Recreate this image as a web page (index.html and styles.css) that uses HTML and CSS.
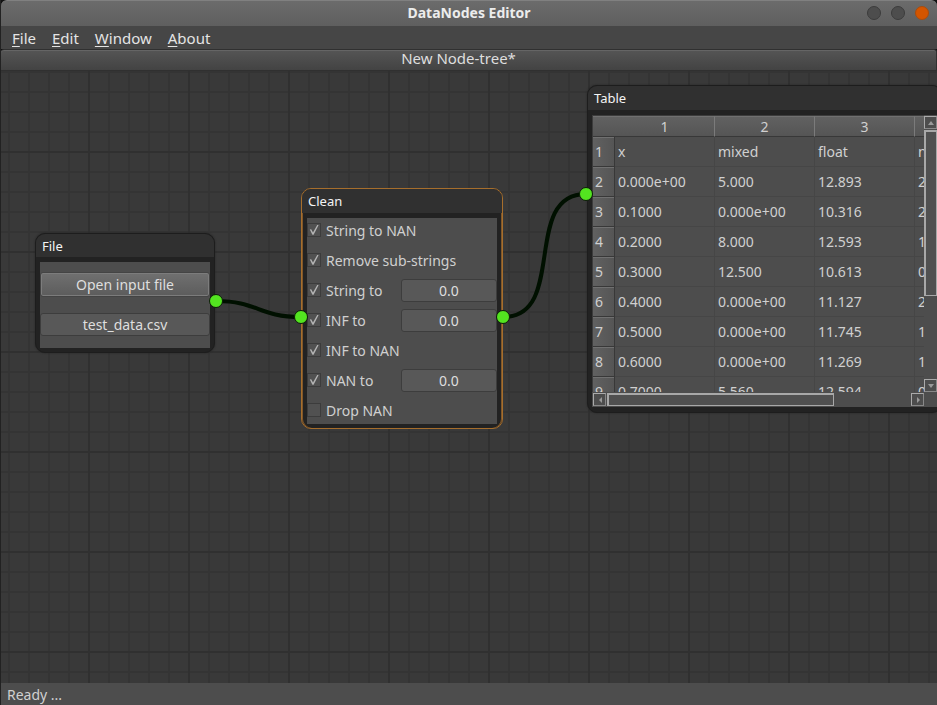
FILE: index.html
```html
<!DOCTYPE html>
<html lang="en">
<head>
<meta charset="utf-8">
<title>DataNodes Editor</title>
<link rel="stylesheet" href="styles.css">
</head>
<body>
<header class="titlebar">
  <h1>DataNodes Editor</h1>
  <div class="window-buttons">
    <button aria-label="Minimize"></button>
    <button aria-label="Maximize"></button>
    <button class="close" aria-label="Close"></button>
  </div>
</header>
<nav class="menubar">
  <button><u>F</u>ile</button>
  <button><u>E</u>dit</button>
  <button><u>W</u>indow</button>
  <button><u>A</u>bout</button>
</nav>
<div class="tab-title">New Node-tree*</div>
<main class="canvas">
  <svg class="wires" aria-hidden="true">
    <path d="M216 230C258 230 258 246 301 246"/>
    <path d="M503 246C568 246 521 123 586 123"/>
  </svg>

  <section class="node node-file">
    <h2>File</h2>
    <div class="panel file-panel">
      <button class="open">Open input file</button>
      <input class="field" type="text" aria-label="File name" value="test_data.csv">
    </div>
  </section>

  <section class="node node-clean">
    <h2>Clean</h2>
    <div class="panel clean-panel">
      <div class="option"><label><input type="checkbox" checked><span>String to NAN</span></label></div>
      <div class="option"><label><input type="checkbox" checked><span>Remove sub-strings</span></label></div>
      <div class="option"><label><input type="checkbox" checked><span>String to</span></label><input class="field" type="text" aria-label="String value" value="0.0"></div>
      <div class="option"><label><input type="checkbox" checked><span>INF to</span></label><input class="field" type="text" aria-label="INF value" value="0.0"></div>
      <div class="option"><label><input type="checkbox" checked><span>INF to NAN</span></label></div>
      <div class="option"><label><input type="checkbox" checked><span>NAN to</span></label><input class="field" type="text" aria-label="NAN value" value="0.0"></div>
      <div class="option"><label><input type="checkbox"><span>Drop NAN</span></label></div>
    </div>
  </section>

  <section class="node node-table">
    <h2>Table</h2>
    <div class="panel table-panel">
      <div class="viewport">
        <table>
          <colgroup><col class="index"><col><col><col><col></colgroup>
          <thead><tr><td class="corner"></td><th>1</th><th>2</th><th>3</th><th></th></tr></thead>
          <tbody>
            <tr><th>1</th><td>x</td><td>mixed</td><td>float</td><td>n</td></tr>
            <tr><th>2</th><td>0.000e+00</td><td>5.000</td><td>12.893</td><td>2</td></tr>
            <tr><th>3</th><td>0.1000</td><td>0.000e+00</td><td>10.316</td><td>2</td></tr>
            <tr><th>4</th><td>0.2000</td><td>8.000</td><td>12.593</td><td>1</td></tr>
            <tr><th>5</th><td>0.3000</td><td>12.500</td><td>10.613</td><td>0</td></tr>
            <tr><th>6</th><td>0.4000</td><td>0.000e+00</td><td>11.127</td><td>2</td></tr>
            <tr><th>7</th><td>0.5000</td><td>0.000e+00</td><td>11.745</td><td>1</td></tr>
            <tr><th>8</th><td>0.6000</td><td>0.000e+00</td><td>11.269</td><td>1</td></tr>
            <tr><th>9</th><td>0.7000</td><td>5.560</td><td>12.594</td><td>0</td></tr>
          </tbody>
        </table>
      </div>
      <div class="scroll vertical">
        <button aria-label="Scroll up"><svg viewBox="0 0 10 10"><path d="M2 7 5 3 8 7z"/></svg></button>
        <div class="track"><div class="thumb"></div></div>
        <button aria-label="Scroll down"><svg viewBox="0 0 10 10"><path d="M2 3 5 7 8 3z"/></svg></button>
      </div>
      <div class="scroll horizontal">
        <button aria-label="Scroll left"><svg viewBox="0 0 10 10"><path d="M7 2 4 5 7 8z"/></svg></button>
        <div class="track"><div class="thumb"></div></div>
        <button aria-label="Scroll right"><svg viewBox="0 0 10 10"><path d="M4 2 7 5 4 8z"/></svg></button>
      </div>
    </div>
  </section>

  <svg class="ports" aria-hidden="true">
    <circle cx="216" cy="230" r="6.5"/>
    <circle cx="301" cy="246" r="6.5"/>
    <circle cx="503" cy="246" r="6.5"/>
    <circle cx="586" cy="123" r="6.5"/>
  </svg>
</main>
<footer class="status">Ready ...</footer>
</body>
</html>
```
FILE: styles.css
```css
* { box-sizing: border-box; }

body {
  margin: 0;
  height: 100vh;
  display: flex;
  flex-direction: column;
  overflow: hidden;
  border-left: 1px solid #222;
  background: #111;
  color: #d0d0d0;
  font: 14px/20px "Noto Sans", "Open Sans", sans-serif;
}

button, input { font: inherit; color: inherit; margin: 0; }
h1, h2 { margin: 0; }

.titlebar {
  display: grid;
  grid-template-columns: 1fr auto 1fr;
  align-items: center;
  height: 26px;
  flex: none;
  padding: 0 8px 2px 0;
  border-top: 1px solid #808080;
  border-radius: 6px 6px 0 0;
  background: linear-gradient(#6b6b6b, #5f5f5f);
}
.titlebar h1 {
  grid-column: 2;
  padding-left: 8px;
  color: #ececec;
  font-size: 14px;
  line-height: 20px;
}
.window-buttons { display: flex; gap: 10px; justify-content: flex-end; }
.window-buttons button {
  width: 14px;
  height: 14px;
  padding: 0;
  border: 1px solid #3c3c3c;
  border-radius: 50%;
  background: #4d4d4d;
}
.window-buttons .close { background: #d45500; border-color: #aa4c0c; }

.menubar {
  display: flex;
  gap: 16px;
  height: 23px;
  flex: none;
  padding: 1px 11px;
  background: #464646;
}
.menubar button {
  padding: 0;
  border: 0;
  background: none;
  color: #e4e4e4;
  font-size: 15px;
  line-height: 20px;
}
.menubar u { text-underline-offset: 2px; }

.tab-title {
  height: 22px;
  flex: none;
  padding-right: 20px;
  border: 1px solid #303030;
  border-width: 1px 1px 1px 0;
  border-radius: 3px 3px 0 0;
  background: linear-gradient(#555, #434343);
  box-shadow: inset 0 1px #656565;
  color: #dedede;
  font-size: 15px;
  line-height: 16px;
  text-align: center;
}

.canvas {
  position: relative;
  flex: 1;
  min-height: 0;
  overflow: hidden;
  background-color: #393939;
  background-image:
    linear-gradient(90deg, #303030 2px, transparent 2px),
    linear-gradient(#303030 2px, transparent 2px),
    linear-gradient(90deg, #343434 2px, transparent 2px),
    linear-gradient(#343434 2px, transparent 2px);
  background-size: 100px 100px, 100px 100px, 20px 20px, 20px 20px;
  background-position: 87px 0, 0 80px, 7px 0, 0 0;
}
.wires, .ports {
  position: absolute;
  top: 0;
  left: -1px;
  width: 100%;
  height: 100%;
  pointer-events: none;
}
.wires path { fill: none; stroke: #001000; stroke-width: 4; }
.ports circle { fill: #53e420; stroke: #0c1c08; stroke-width: 1; }

.node {
  position: absolute;
  padding: 0 4px 4px;
  border: 1px solid #1d1d1d;
  border-radius: 10px;
  background: #222;
  box-shadow: 0 0 2px #222;
}
.node h2 {
  height: 24px;
  margin: 0 -4px 5px;
  padding: 0 6px;
  border-radius: 9px 9px 0 0;
  background: #303030;
  color: #f4f4f4;
  font-size: 13px;
  font-weight: 400;
  line-height: 24px;
}
.panel { background: #4d4d4d; }

.field {
  height: 23px;
  width: 96px;
  padding: 0 4px;
  border: 1px solid #3d3d3d;
  border-radius: 3px;
  background: #585858;
  color: #dedede;
  text-align: center;
}

.node-file { left: 34px; top: 162px; width: 180px; }
.node-file h2 { height: 23px; }
.file-panel {
  display: flex;
  flex-direction: column;
  gap: 16px;
  padding: 10px 0 12px;
}
.file-panel .field { width: 100%; }
.open {
  height: 25px;
  padding: 0;
  border: 1px solid #444;
  border-radius: 3px;
  background: linear-gradient(#707070, #5c5c5c);
  box-shadow: inset 0 0 0 1px #7c7c7c;
  color: #dedede;
}

.node-clean {
  left: 300px;
  top: 117px;
  width: 202px;
  padding: 0 5px 4px;
  border: 1px solid #a66e2c;
  box-shadow: inset 1px 0 #80572a, inset -1px 0 #80572a;
}
.node-clean h2 { margin: 0 -5px 5px; }
.clean-panel {
  display: flex;
  flex-direction: column;
  gap: 6px;
  padding: 1px 0;
}
.option { display: flex; justify-content: space-between; height: 24px; }
.option label { display: flex; align-items: center; gap: 5px; }
.option input[type="checkbox"] {
  appearance: none;
  width: 14px;
  height: 14px;
  margin-bottom: 2px;
  border: 1px solid #3c3c3c;
  background: #515151;
}
.option input[type="checkbox"]:checked::after {
  content: "";
  display: block;
  width: 10px;
  height: 10px;
  margin: 1px;
  background: #b4b4b4;
  clip-path: polygon(8% 45%, 22% 42%, 40% 74%, 82% 0, 96% 0, 46% 98%, 34% 98%);
}

.node-table { left: 586px; top: 14px; width: 355px; padding-bottom: 5px; }
.table-panel {
  display: grid;
  grid-template-columns: 1fr 13px;
  grid-template-rows: 277px 15px;
}
.viewport { overflow: hidden; border: 1px solid #3c3c3c; border-width: 1px 0 0 1px; }
table { width: 422px; table-layout: fixed; border-collapse: separate; border-spacing: 0; }
col { width: 100px; }
col.index { width: 22px; }
th, td { padding: 0 3px; white-space: nowrap; font-weight: 400; overflow: hidden; }
thead th, .corner {
  height: 21px;
  border-bottom: 1px solid #383838;
  border-top: 1px solid #707070;
  background: linear-gradient(#616161, #555);
}
thead th { border-right: 1px solid #7b7b7b; line-height: 18px; }
tbody th {
  height: 30px;
  padding: 0 0 0 2px;
  border: 1px solid #383838;
  border-width: 0 1px 1px 0;
  background: linear-gradient(90deg, #616161, #555);
  box-shadow: inset 0 1px #707070;
  text-align: left;
}
tbody td { border: 1px solid #464646; border-width: 0 1px 1px 0; }

.scroll { display: flex; gap: 1px; }
.vertical { flex-direction: column; padding: 1px 0 0; }
.horizontal { padding: 1px 0 1px 1px; }
.scroll button {
  display: grid;
  place-items: center;
  flex: none;
  width: 13px;
  height: 13px;
  padding: 0;
  border: 1px solid #888;
  border-top-color: #aaa;
  border-left-color: #aaa;
  background: #4d4d4d;
}
.scroll svg { width: 10px; height: 10px; fill: #999; }
.track { flex: 1; min-width: 0; min-height: 0; }
.thumb { border: 2px solid #a8a8a8; border-width: 2px 1px 1px 2px; background: #505050; }
.vertical .thumb { width: 13px; height: 67%; }
.horizontal .thumb { width: 75%; height: 13px; }

.status {
  height: 22px;
  flex: none;
  padding: 2px 6px;
  background: #4d4d4d;
}
```
